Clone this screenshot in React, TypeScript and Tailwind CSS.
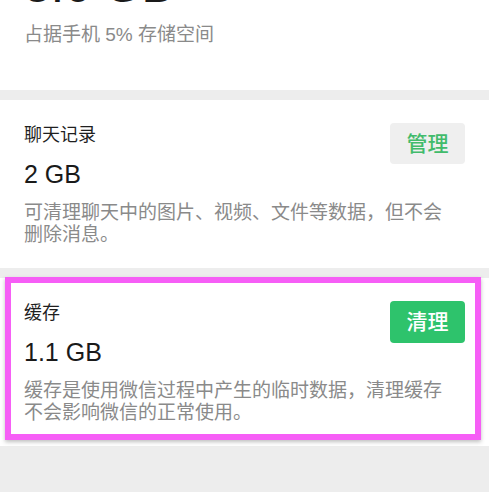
const font = "font-['Liberation_Sans','Noto_Sans_CJK_SC',sans-serif]";

type Item = {
  title: string;
  size: string;
  desc: string;
  action: string;
  primary?: boolean;
};

function StorageItem({ item }: { item: Item }) {
  return (
    <div className="bg-white pl-[24px] pr-[24px] pt-[23px] pb-[22px]">
      <div className="flex items-start justify-between">
        <div className="flex flex-col">
          <div className="text-[18px] leading-[24px] text-[#1f1f1f]">{item.title}</div>
          <div className="mt-[12px] text-[25px] leading-[30px] text-[#1a1a1a]">{item.size}</div>
        </div>
        <button
          className={
            item.primary
              ? "flex h-[42px] w-[75px] items-center justify-center rounded-[4px] bg-[#2ec36c] text-[21px] font-medium text-white"
              : "flex h-[41px] w-[75px] items-center justify-center rounded-[4px] bg-[#efefef] text-[21px] font-medium text-[#41bb6b]"
          }
        >
          {item.action}
        </button>
      </div>
      <p className="mt-[13px] pr-[16px] text-[19px] leading-[22px] text-[#8a8a8a]">{item.desc}</p>
    </div>
  );
}

export default function App() {
  const chat: Item = {
    title: "聊天记录",
    size: "2 GB",
    desc: "可清理聊天中的图片、视频、文件等数据，但不会删除消息。",
    action: "管理",
  };
  const cache: Item = {
    title: "缓存",
    size: "1.1 GB",
    desc: "缓存是使用微信过程中产生的临时数据，清理缓存不会影响微信的正常使用。",
    action: "清理",
    primary: true,
  };

  return (
    <div className={`min-h-screen overflow-hidden bg-[#ededed] ${font}`}>
      <div className="bg-white pl-[24px] pb-[42px]">
        <div className="mt-[-38px] text-[48px] leading-[48px] text-[#1a1a1a]">3.6 GB</div>
        <div className="mt-[12px] text-[19px] leading-[26px] text-[#8a8a8a]">占据手机 5% 存储空间</div>
      </div>

      <div className="h-[10px]" />
      <StorageItem item={chat} />
      <div className="h-[10px]" />

      <div className="relative">
        <StorageItem item={cache} />
        <div className="pointer-events-none absolute top-[-1px] left-[5px] right-[8px] bottom-[6px] border-[6px] border-[#f65ef6] shadow-[0_2px_4px_rgba(0,0,0,0.25)]" />
      </div>
    </div>
  );
}
